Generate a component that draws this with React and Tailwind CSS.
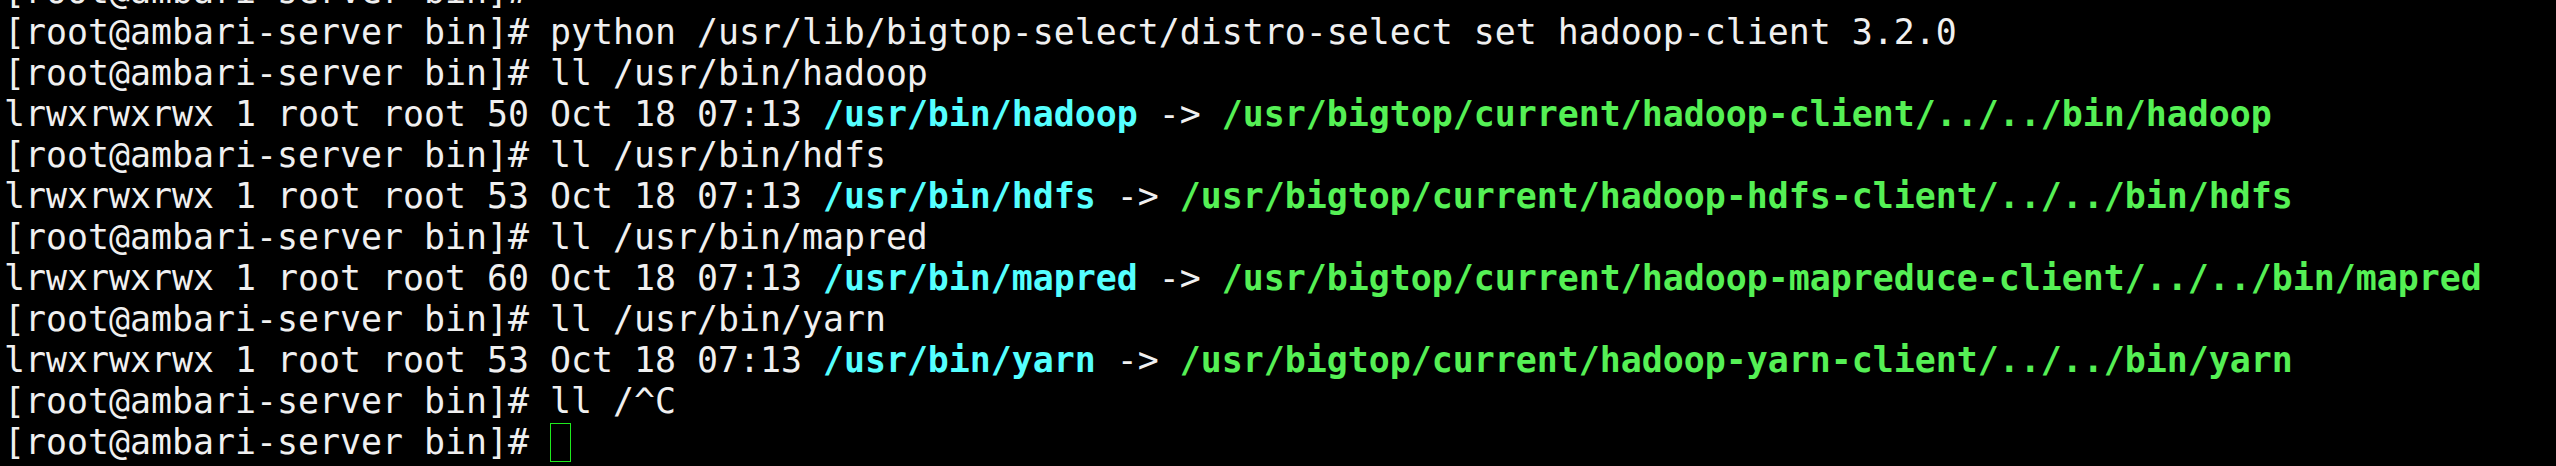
import React from 'react';

const PROMPT = '[root@ambari-server bin]#';

const links = [
  { size: '50', name: 'hadoop', target: '/usr/bigtop/current/hadoop-client/../../bin/hadoop' },
  { size: '53', name: 'hdfs', target: '/usr/bigtop/current/hadoop-hdfs-client/../../bin/hdfs' },
  { size: '60', name: 'mapred', target: '/usr/bigtop/current/hadoop-mapreduce-client/../../bin/mapred' },
  { size: '53', name: 'yarn', target: '/usr/bigtop/current/hadoop-yarn-client/../../bin/yarn' },
];

const Line = ({ children }) => (
  <div className="h-[41px] leading-[41px] whitespace-pre">{children}</div>
);

const App = () => {
  return (
    <div className="h-screen w-full overflow-hidden bg-black">
      <div
        className="-mt-[29px] pl-[4px] text-[34.88px] text-[#f0f0f0]"
        style={{ fontFamily: '"DejaVu Sans Mono", "Liberation Mono", monospace' }}
      >
        <Line>{PROMPT}</Line>
        <Line>{PROMPT} python /usr/lib/bigtop-select/distro-select set hadoop-client 3.2.0</Line>
        {links.map((link) => (
          <React.Fragment key={link.name}>
            <Line>{PROMPT} ll /usr/bin/{link.name}</Line>
            <Line>
              lrwxrwxrwx 1 root root {link.size} Oct 18 07:13{' '}
              <span className="font-bold text-[#55ffff]">/usr/bin/{link.name}</span>
              {' -> '}
              <span className="font-bold text-[#55f055]">{link.target}</span>
            </Line>
          </React.Fragment>
        ))}
        <Line>{PROMPT} ll /^C</Line>
        <Line>
          <span className="flex items-center">
            {PROMPT + ' '}
            <span className="inline-block h-[39px] w-[21px] border border-[#1eea1e]" />
          </span>
        </Line>
      </div>
    </div>
  );
};

export default App;
